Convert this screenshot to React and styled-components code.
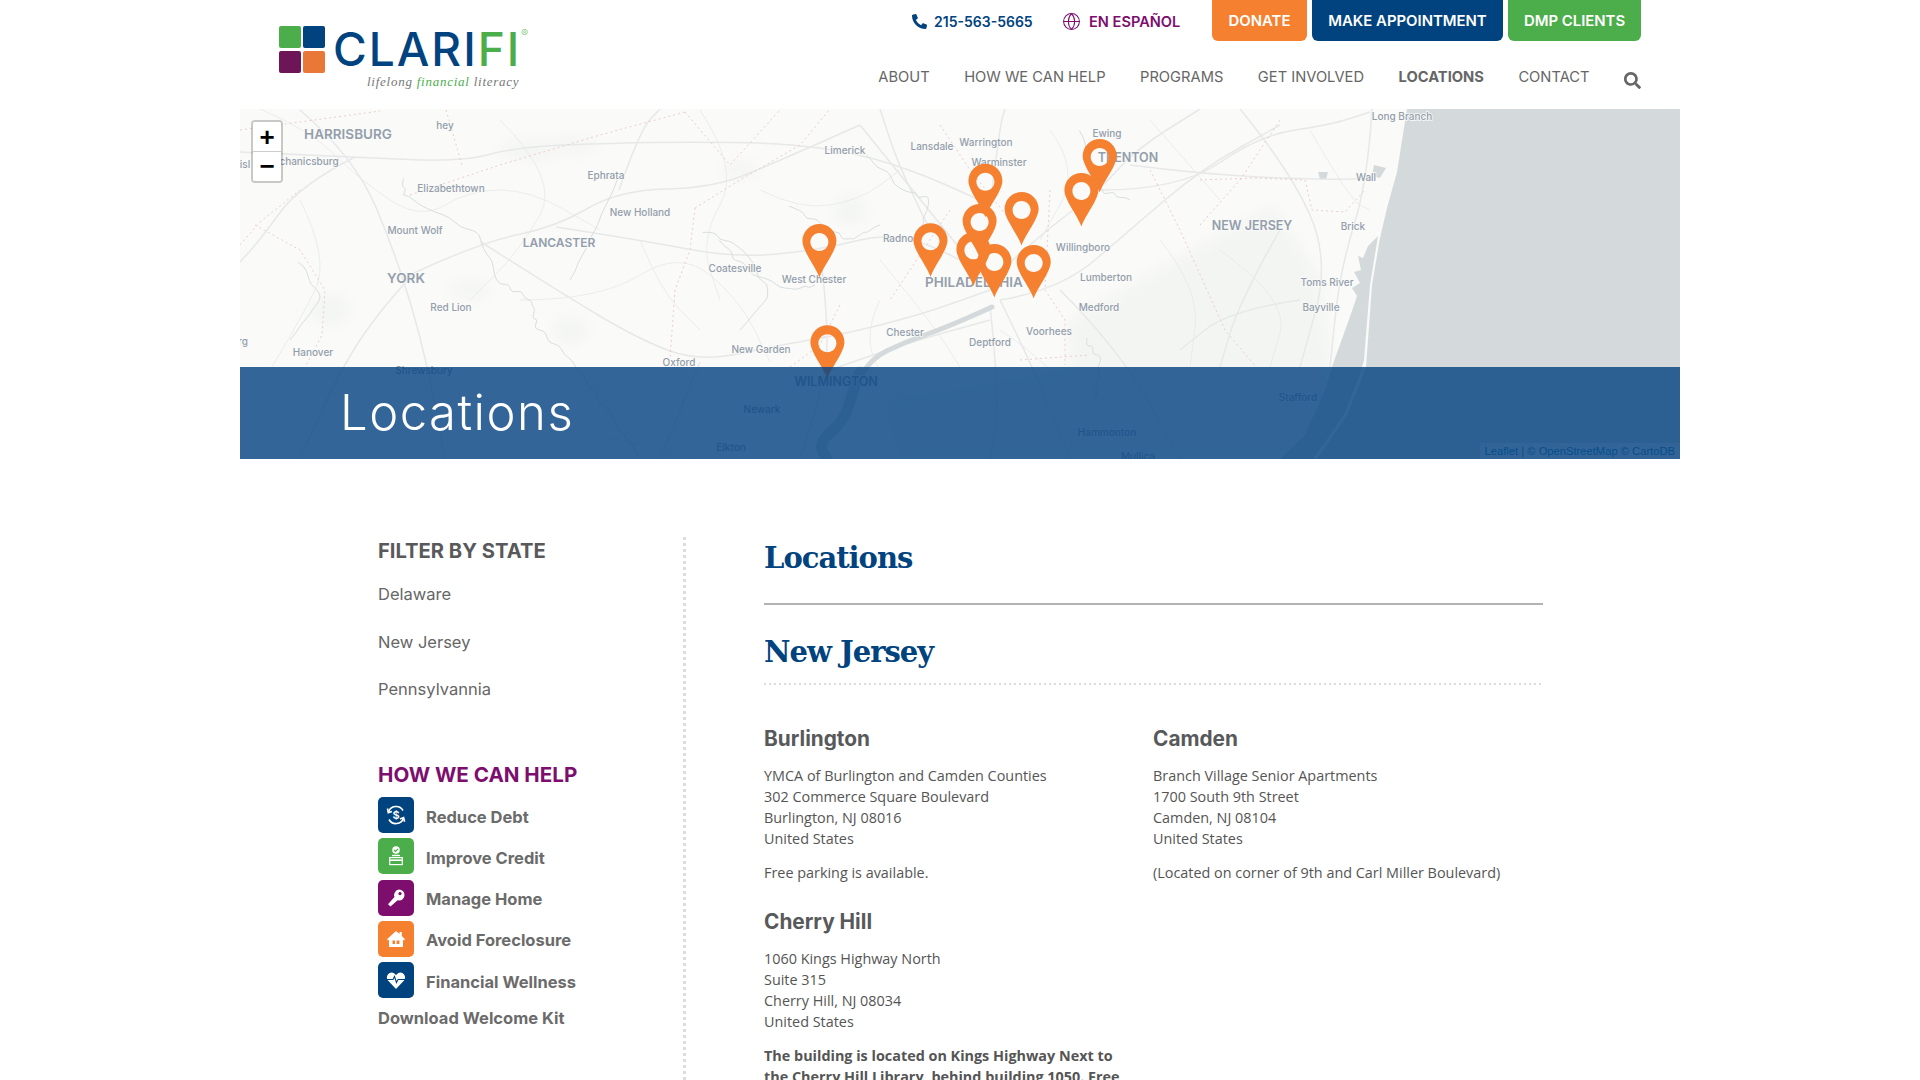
import React from "react";
import styled, { createGlobalStyle } from "styled-components";
import { FaPhoneAlt, FaSearch } from "react-icons/fa";
import { Globe } from "lucide-react";

const NAVY = "#00437f";
const GREEN = "#4bae4a";
const ORANGE = "#f58030";
const PURPLE = "#7d0e6e";
const SANS = `Inter, "Liberation Sans", sans-serif`;
const BODY = `"Open Sans", "Liberation Sans", sans-serif`;
const SLAB = `"DejaVu Serif", "Liberation Serif", serif`;

const GlobalStyle = createGlobalStyle`
  html { scrollbar-width: none; }
  body {
    margin: 0;
    background: #fff;
    color: #555;
    font-family: ${BODY};
  }
  * { box-sizing: border-box; }
`;

const navItems = ["ABOUT", "HOW WE CAN HELP", "PROGRAMS", "GET INVOLVED", "LOCATIONS", "CONTACT"];

const labels = [
  ["HARRISBURG", 348, 134, 13.5, 600],
  ["hey", 445, 125, 10],
  ["chanicsburg", 309, 161, 10],
  ["isl", 245, 164, 10],
  ["Elizabethtown", 451, 188, 10],
  ["Ephrata", 606, 175, 10],
  ["New Holland", 640, 212, 10],
  ["Mount Wolf", 415, 230, 10],
  ["LANCASTER", 559, 242, 12, 600],
  ["Coatesville", 735, 268, 10],
  ["West Chester", 814, 279, 10],
  ["YORK", 406, 278, 13.5, 600],
  ["Red Lion", 451, 307, 10],
  ["Hanover", 313, 352, 10],
  ["rg", 243, 341, 10],
  ["Shrewsbury", 424, 370, 10],
  ["Oxford", 679, 362, 10],
  ["New Garden", 761, 349, 10],
  ["WILMINGTON", 836, 381, 12.5, 600],
  ["Newark", 762, 409, 10],
  ["Elkton", 731, 447, 10],
  ["Limerick", 845, 150, 10],
  ["Lansdale", 932, 146, 10],
  ["Warrington", 986, 142, 10],
  ["Warminster", 999, 162, 10],
  ["Ewing", 1107, 133, 10],
  ["TRENTON", 1128, 157, 12.5, 600],
  ["Long Branch", 1402, 116, 10],
  ["Wall", 1366, 177, 10],
  ["NEW JERSEY", 1252, 225, 12.5, 600],
  ["Brick", 1353, 226, 10],
  ["Radnor", 900, 238, 10],
  ["Willingboro", 1083, 247, 10],
  ["Lumberton", 1106, 277, 10],
  ["PHILADELPHIA", 974, 282, 13.5, 600],
  ["Toms River", 1327, 282, 10],
  ["Medford", 1099, 307, 10],
  ["Bayville", 1321, 307, 10],
  ["Voorhees", 1049, 331, 10],
  ["Chester", 905, 332, 10],
  ["Deptford", 990, 342, 10],
  ["Stafford", 1298, 397, 10],
  ["Hammonton", 1107, 432, 10],
  ["Mullica", 1138, 456, 10],
];

const pins = [
  [1099.7, 156],
  [985.4, 180.7],
  [1081.4, 190],
  [1021.6, 209],
  [979.6, 221],
  [930.5, 240.3],
  [819.4, 241],
  [973.4, 249.3],
  [994.4, 261],
  [1033.7, 262],
  [827.4, 342.3],
];

const roads = [
  "M240 152 L355 157 L461 162 L517 147 L615 143 L687 142 L781 143 L857 153 L925 175 L990 205",
  "M300 110 L355 157 L398 260 L426 357 L445 459",
  "M414 273 L481 242 L556 227 L619 190 L714 188 L781 160 L860 125",
  "M355 157 L300 185 L260 240 L240 262",
  "M414 273 L380 310 L340 370 L300 459",
  "M556 227 L640 240 L735 258 L820 250 L900 230 L990 275",
  "M481 242 L556 290 L640 340 L700 362 L780 345 L840 335 L920 315 L990 290",
  "M820 250 L826 300 L828 370 L800 459",
  "M619 190 L640 130 L660 109",
  "M860 125 L925 205 L985 280",
  "M990 280 L1040 235 L1100 190 L1135 150 L1200 109",
  "M1100 190 L1180 190 L1260 135 L1330 125 L1370 112",
  "M1130 165 L1210 175 L1330 180 L1376 178",
  "M1000 300 L1060 290 L1130 230 L1200 170 L1280 125",
  "M1000 300 L1030 360 L1070 459",
  "M990 305 L1000 400 L990 459",
  "M1060 290 L1120 350 L1180 459",
  "M1240 109 L1290 170 L1330 260 L1300 367",
  "M1372 109 L1368 180 L1340 270 L1330 367",
  "M1300 300 L1230 310 L1180 350",
  "M830 370 L900 345 L990 320",
  "M700 362 L660 459",
  "M990 205 L1000 125 L1005 109",
  "M930 230 L900 170 L880 109",
  "M1280 230 L1240 300 L1220 367",
];

const thinRoads = [
  "M260 109 L310 130 L360 180 L420 220 L470 190 L530 190 L600 230",
  "M300 200 L330 260 L300 320 L270 370",
  "M520 300 L600 300 L680 250 L740 300 L770 362",
  "M640 240 L660 290 L700 330",
  "M880 260 L930 320 L960 367",
  "M760 190 L800 210 L860 200 L900 170",
  "M1160 240 L1200 290 L1190 367",
  "M1050 130 L1080 170 L1040 240",
  "M1220 250 L1290 300 L1270 367",
  "M1150 120 L1220 200",
  "M1310 130 L1350 200 L1370 210",
  "M430 370 L520 420 L620 440 L700 459",
  "M500 120 L560 180 L520 250 L470 300",
  "M700 110 L740 170 L700 240 L720 300",
  "M880 300 L860 340 L900 400",
  "M1000 330 L1060 370 L1100 450",
];

const county = [
  "M240 130 L300 122 L380 111",
  "M446 110 L462 165",
  "M410 195 L500 165 L600 135 L685 112",
  "M685 112 L730 165 L780 110",
  "M240 245 L260 222 L300 190",
  "M255 225 L300 250 L325 290 L322 335 L305 367",
  "M695 208 L690 250 L675 290 L670 360",
  "M695 208 L740 180 L800 145 L830 109",
  "M840 305 L820 345 L790 367",
  "M950 210 L920 255 L890 300",
  "M940 125 L970 170 L1010 220",
  "M1050 190 L1045 290 L1065 320 L1065 365",
  "M1150 170 L1180 230 L1225 330 L1256 367",
  "M1255 178 L1305 180 L1312 210 L1345 212 L1365 190",
  "M1200 180 L1255 178",
  "M1200 225 L1240 180 L1280 120",
  "M1020 360 L1090 355",
];

const rivers = [
  "M402 180 L406 197 L477 233 L501 283 L532 300 L536 327 L572 360 L600 400 L640 459",
  "M790 205 L820 225 L850 240 L880 225",
  "M720 240 L745 270 L790 290 L815 285",
  "M1080 130 L1100 190 L1130 200",
  "M860 150 L905 190 L930 200 L920 230",
  "M620 175 L590 240 L570 280",
  "M705 230 L745 250 L770 295 L740 330",
  "M300 260 L320 300 L290 340",
  "M1085 340 L1100 360 L1095 400",
];

const blobs = [
  [530, 150, 30, 9],
  [575, 145, 22, 7],
  [740, 170, 18, 7],
  [330, 310, 18, 14],
  [570, 330, 16, 12],
  [470, 290, 20, 8],
  [850, 210, 14, 14],
];

// rounds a point list off into one curve, with a small wave for the rivers
const curve = (d, wave = 0) => {
  const nums = d.match(/-?\d+(\.\d+)?/g).map(Number);
  const pts = [];
  for (let i = 0; i + 3 < nums.length; i += 2) {
    const [x1, y1, x2, y2] = nums.slice(i, i + 4);
    for (let s = 0; s < (wave ? 5 : 1); s++) {
      const t = wave ? s / 5 : 0;
      const off = wave ? Math.sin((x1 + y1 + s) * 2.7) * wave : 0;
      pts.push([x1 + (x2 - x1) * t + off, y1 + (y2 - y1) * t - off]);
    }
  }
  pts.push(nums.slice(-2));
  let out = `M${pts[0][0]} ${pts[0][1]}`;
  for (let i = 1; i < pts.length - 1; i++) {
    const mx = (pts[i][0] + pts[i + 1][0]) / 2;
    const my = (pts[i][1] + pts[i + 1][1]) / 2;
    out += ` Q${pts[i][0]} ${pts[i][1]} ${mx} ${my}`;
  }
  return `${out} L${pts[pts.length - 1][0]} ${pts[pts.length - 1][1]}`;
};

const MapLayer = () => (
  <MapSvg viewBox="240 109 1440 350" aria-hidden="true">
    <defs>
      <filter id="soft" x="-20%" y="-20%" width="140%" height="140%">
        <feGaussianBlur stdDeviation="7" />
      </filter>
    </defs>
    <rect x="240" y="109" width="1440" height="350" fill="#fafaf8" />
    <g filter="url(#soft)" fill="#f3f5f3">
      <path d="M1072 367 L1068 323 L1130 287 L1206 243 L1273 207 L1318 277 L1331 367 L1322 459 L900 459 L880 400 Z" />
      {blobs.map(([x, y, rx, ry]) => (
        <ellipse key={`${x}-${y}`} cx={x} cy={y} rx={rx} ry={ry} />
      ))}
    </g>
    <path
      d="M1407 109 L1397 172 L1387 208 L1380 238 L1372 285 L1366 367 L1363 375 L1347 415 L1317 459 L1680 459 L1680 109 Z"
      fill="#d4dadc"
    />
    <path
      d="M1378 236 L1368 246 L1363 258 L1358 256 L1361 270 L1354 272 L1360 283 L1352 288 L1357 296 L1353 308 L1347 325 L1338 350 L1332 367 L1325 390 L1305 435 L1280 459 L1313 459 L1344 415 L1360 375 L1364 360 L1370 285 Z"
      fill="#d4dadc"
    />
    <path d="M1374 165 L1386 168 L1380 178 L1372 176 Z M1318 172 L1328 172 L1326 180 L1320 179 Z" fill="#d4dadc" />
    {roads.map((d) => (
      <RoadLine key={d} d={curve(d)} />
    ))}
    {thinRoads.map((d) => (
      <RoadLine key={d} d={curve(d)} $thin />
    ))}
    {rivers.map((d) => (
      <RiverLine key={d} d={curve(d, 2.5)} />
    ))}
    <WaterLine $width={5} d={curve("M992 307 L970 317 L939 330 L903 343 L872 358 L854 387")} />
    <WaterLine $width={11} d={curve("M860 372 L854 387 L845 420 L818 443 L827 459")} />
    {county.map((d) => (
      <CountyLine key={d} d={d} />
    ))}
    {labels.map(([text, x, y, size, weight]) => (
      <PlaceLabel key={text} x={x} y={y} fontSize={size} fontWeight={weight || 500}>
        {text}
      </PlaceLabel>
    ))}
    {pins.map(([x, y]) => (
      <PinShape
        key={`${x}-${y}`}
        transform={`translate(${x} ${y})`}
        fillRule="evenodd"
        d="M0 36.5 C-4 25 -17 10 -17 0 A17 17 0 1 1 17 0 C17 10 4 25 0 36.5 Z M0 -8 C-5 -8 -9 -4 -9 1 C-9 6 -5 10 0 10 C5 10 9 6 9 1 C9 -4 5 -8 0 -8 Z"
      />
    ))}
  </MapSvg>
);

const LogoMark = () => (
  <LogoSquares>
    <LogoSquare $color={GREEN} />
    <LogoSquare $color={NAVY} />
    <LogoSquare $color="#6d1557" />
    <LogoSquare $color="#e97838" />
  </LogoSquares>
);

const DebtIcon = () => (
  <svg width="36" height="36" viewBox="0 0 36 36" fill="none" stroke="#fff" strokeWidth="1.6">
    <path d="M10.5 15 A8 8 0 0 1 25 13.5" />
    <path d="M9.5 11.5 L10.3 15.6 L14 14.4" />
    <path d="M25.6 21 A8 8 0 0 1 11 22.5" />
    <path d="M26.6 24.8 L25.6 20.6 L22 22" />
    <text x="18" y="22" textAnchor="middle" fontFamily="Inter, sans-serif" fontSize="11" fontWeight="600" fill="#fff" stroke="none">
      $
    </text>
  </svg>
);

const CreditIcon = () => (
  <svg width="36" height="36" viewBox="0 0 36 36" fill="none">
    <circle cx="18" cy="12" r="3.8" fill="#fff" />
    <path d="M16 12 L17.5 13.5 L20 10.8" stroke={GREEN} strokeWidth="1.2" />
    <rect x="11.7" y="19.6" width="12.6" height="7" stroke="#fff" strokeWidth="1.2" />
    <rect x="11.5" y="21.4" width="13" height="1.6" fill="#fff" />
    <rect x="14" y="16.8" width="8" height="1.4" fill="#fff" />
  </svg>
);

const KeyIcon = () => (
  <svg width="36" height="36" viewBox="0 0 36 36" fill="#fff">
    <path
      fillRule="evenodd"
      d="M21 9.5 A5.5 5.5 0 0 1 21 20.5 L19.6 20.2 L12.5 26.5 L10 24.2 L16.5 17 A5.5 5.5 0 0 1 21 9.5 Z M22 12 A1.6 1.6 0 1 0 22.01 12 Z"
    />
  </svg>
);

const HomeIcon = () => (
  <svg width="36" height="36" viewBox="0 0 36 36" fill="#fff">
    <path
      fillRule="evenodd"
      d="M18 10 L21.5 13 V11 H23.8 V15 L27 18.2 L26 19.5 L25 18.6 V26 H11 V18.6 L10 19.5 L9 18.2 Z M14.5 19.5 V23 H17 V19.5 Z M18.6 19.5 V23 H21.4 V19.5 Z"
    />
  </svg>
);

const HeartIcon = () => (
  <svg width="36" height="36" viewBox="0 0 36 36" fill="none">
    <path d="M18 27 L10 18.5 C6.5 14 12 8.5 16 11.2 L18 13 L20 11.2 C24 8.5 29.5 14 26 18.5 Z" fill="#fff" />
    <path d="M9 17.5 H15 L16.5 14.5 L18.5 20.5 L20 17.5 H27" stroke={NAVY} strokeWidth="1.1" />
  </svg>
);

const helpItems = [
  ["Reduce Debt", NAVY, DebtIcon],
  ["Improve Credit", GREEN, CreditIcon],
  ["Manage Home", PURPLE, KeyIcon],
  ["Avoid Foreclosure", ORANGE, HomeIcon],
  ["Financial Wellness", NAVY, HeartIcon],
];

const App = () => (
  <Page>
    <GlobalStyle />
    <Header>
      <LogoLink>
        <LogoMark />
        <LogoText>
          <Wordmark>
            CLARI<WordmarkGreen>FI</WordmarkGreen>
            <Registered>®</Registered>
          </Wordmark>
          <Tagline>
            lifelong <TaglineGreen>financial</TaglineGreen> literacy
          </Tagline>
        </LogoText>
      </LogoLink>
      <HeaderRight>
        <TopRow>
          <ContactLink $color={NAVY} $width={150} $gap={7} $size={14}>
            <FaPhoneAlt size={15} />
            215-563-5665
          </ContactLink>
          <ContactLink $color={PURPLE} $width={150} $gap={8} $size={14.6}>
            <Globe size={19} strokeWidth={1.3} />
            EN ESPAÑOL
          </ContactLink>
          <CtaGroup>
            <CtaButton $bg={ORANGE} $width={95}>DONATE</CtaButton>
            <CtaButton $bg={NAVY} $width={191}>MAKE APPOINTMENT</CtaButton>
            <CtaButton $bg={GREEN} $width={133}>DMP CLIENTS</CtaButton>
          </CtaGroup>
        </TopRow>
        <NavRow>
          {navItems.map((item) => (
            <NavLink key={item} $active={item === "LOCATIONS"}>
              {item}
            </NavLink>
          ))}
          <SearchIcon>
            <FaSearch size={17} />
          </SearchIcon>
        </NavRow>
      </HeaderRight>
    </Header>

    <MapBox>
      <MapLayer />
      <ZoomControl>
        <ZoomButton>+</ZoomButton>
        <ZoomButton>−</ZoomButton>
      </ZoomControl>
      <Attribution>Leaflet | © OpenStreetMap © CartoDB</Attribution>
      <TitleBand>
        <BandTitle>Locations</BandTitle>
      </TitleBand>
    </MapBox>

    <Content>
      <Sidebar>
        <FilterTitle>FILTER BY STATE</FilterTitle>
        <StateList>
          <StateLink>Delaware</StateLink>
          <StateLink>New Jersey</StateLink>
          <StateLink>Pennsylvannia</StateLink>
        </StateList>
        <HelpTitle>HOW WE CAN HELP</HelpTitle>
        <HelpList>
          {helpItems.map(([label, color, Icon]) => (
            <HelpRow key={label}>
              <IconTile $bg={color}>
                <Icon />
              </IconTile>
              <HelpLabel>{label}</HelpLabel>
            </HelpRow>
          ))}
        </HelpList>
        <WelcomeKit>Download Welcome Kit</WelcomeKit>
      </Sidebar>

      <Main>
        <PageTitle>Locations</PageTitle>
        <SolidRule />
        <StateTitle>New Jersey</StateTitle>
        <DottedRule />
        <LocationGrid>
          <Location>
            <CityName>Burlington</CityName>
            <Address>
              YMCA of Burlington and Camden Counties
              <br />
              302 Commerce Square Boulevard
              <br />
              Burlington, NJ 08016
              <br />
              United States
            </Address>
            <Note>Free parking is available.</Note>
          </Location>
          <Location>
            <CityName>Camden</CityName>
            <Address>
              Branch Village Senior Apartments
              <br />
              1700 South 9th Street
              <br />
              Camden, NJ 08104
              <br />
              United States
            </Address>
            <Note>(Located on corner of 9th and Carl Miller Boulevard)</Note>
          </Location>
          <Location>
            <CityName>Cherry Hill</CityName>
            <Address>
              1060 Kings Highway North
              <br />
              Suite 315
              <br />
              Cherry Hill, NJ 08034
              <br />
              United States
            </Address>
            <Note $bold>
              The building is located on Kings Highway Next to the Cherry Hill Library, behind building 1050. Free
              parking is available.
            </Note>
          </Location>
        </LocationGrid>
      </Main>
    </Content>
  </Page>
);

export default App;

const Page = styled.div`
  width: 1440px;
  margin: 0 auto;
`;

const Header = styled.header`
  height: 109px;
  padding: 0 39px;
  display: flex;
  justify-content: space-between;
`;

const LogoLink = styled.a`
  display: flex;
  align-items: flex-start;
  gap: 8px;
  padding-top: 26px;
`;

const LogoSquares = styled.div`
  width: 46px;
  height: 46px;
  display: grid;
  grid-template-columns: 22px 22px;
  grid-auto-rows: 22px;
  gap: 3px 2px;
`;

const LogoSquare = styled.span`
  background: ${(p) => p.$color};
  border-radius: 2px;
`;

const LogoText = styled.div`
  display: flex;
  flex-direction: column;
`;

const Wordmark = styled.div`
  position: relative;
  font-family: ${SANS};
  font-size: 46px;
  font-weight: 500;
  line-height: 46px;
  letter-spacing: 2px;
  color: ${NAVY};
  white-space: nowrap;
`;

const WordmarkGreen = styled.span`
  color: ${GREEN};
`;

const Registered = styled.span`
  position: absolute;
  top: 1px;
  left: 188px;
  font-size: 11px;
  line-height: 12px;
  letter-spacing: 0;
  color: ${GREEN};
  opacity: 0.6;
`;

const Tagline = styled.div`
  margin: 2px 0 0 34px;
  font-family: "Liberation Serif", serif;
  font-style: italic;
  font-size: 13px;
  line-height: 16px;
  letter-spacing: 0.75px;
  color: #777;
  white-space: nowrap;
`;

const TaglineGreen = styled.span`
  color: ${GREEN};
`;

const HeaderRight = styled.div`
  display: flex;
  flex-direction: column;
  align-items: flex-end;
`;

const TopRow = styled.div`
  display: flex;
  align-items: flex-start;
`;

const ContactLink = styled.a`
  width: ${(p) => p.$width}px;
  height: 41px;
  padding-top: 2px;
  display: flex;
  align-items: center;
  gap: ${(p) => p.$gap}px;
  font-family: ${SANS};
  font-size: ${(p) => p.$size}px;
  font-weight: 600;
  color: ${(p) => p.$color};
  white-space: nowrap;
`;

const CtaGroup = styled.div`
  display: flex;
  gap: 5px;
`;

const CtaButton = styled.a`
  width: ${(p) => p.$width}px;
  height: 41px;
  display: flex;
  align-items: center;
  justify-content: center;
  background: ${(p) => p.$bg};
  border-radius: 0 0 6px 6px;
  font-family: ${SANS};
  font-size: 14.9px;
  font-weight: 600;
  color: #fff;
  white-space: nowrap;
`;

const NavRow = styled.nav`
  margin-top: 24px;
  display: flex;
  align-items: center;
  gap: 34.5px;
`;

const NavLink = styled.a`
  font-family: ${SANS};
  font-size: 14.7px;
  line-height: 24px;
  font-weight: ${(p) => (p.$active ? 700 : 400)};
  color: #666;
  white-space: nowrap;
`;

const SearchIcon = styled.span`
  display: flex;
  margin-top: 6px;
  color: #666;
`;

const MapBox = styled.section`
  position: relative;
  height: 350px;
  overflow: hidden;
`;

const MapSvg = styled.svg`
  display: block;
  width: 1440px;
  height: 350px;
`;

const RoadLine = styled.path`
  fill: none;
  stroke: #e7e8e8;
  stroke-width: ${(p) => (p.$thin ? 0.8 : 1.5)};
`;

const RiverLine = styled.path`
  fill: none;
  stroke: #d9dee0;
  stroke-width: 1;
`;

const WaterLine = styled.path`
  fill: none;
  stroke: #d4dadc;
  stroke-width: ${(p) => p.$width};
  stroke-linecap: round;
`;

const CountyLine = styled.path`
  fill: none;
  stroke: #ecccd0;
  stroke-width: 1;
  stroke-dasharray: 2 3;
`;

const PlaceLabel = styled.text`
  font-family: ${SANS};
  fill: #939eac;
  text-anchor: middle;
  dominant-baseline: central;
  paint-order: stroke;
  stroke: #fafaf8;
  stroke-width: 1.5px;
`;

const PinShape = styled.path`
  fill: #f58030;
`;

const ZoomControl = styled.div`
  position: absolute;
  top: 11px;
  left: 11px;
  width: 32px;
  border: 2px solid rgba(0, 0, 0, 0.2);
  border-radius: 4px;
  background-clip: padding-box;
`;

const ZoomButton = styled.div`
  height: 29px;
  background: #fff;
  display: flex;
  align-items: center;
  justify-content: center;
  font-family: "Liberation Sans", sans-serif;
  font-size: 26px;
  font-weight: 700;
  color: #000;
  &:first-child {
    height: 30px;
    padding-top: 2px;
    border-bottom: 1px solid #ccc;
    border-radius: 2px 2px 0 0;
  }
  &:last-child {
    border-radius: 0 0 2px 2px;
  }
`;

const Attribution = styled.div`
  position: absolute;
  right: 0;
  bottom: 0;
  padding: 0 5px;
  height: 16px;
  line-height: 16px;
  background: rgba(255, 255, 255, 0.7);
  font-family: "Liberation Sans", sans-serif;
  font-size: 11.2px;
  color: #0078a8;
`;

const TitleBand = styled.div`
  position: absolute;
  left: 0;
  right: 0;
  bottom: 0;
  height: 92px;
  padding-left: 100px;
  display: flex;
  align-items: center;
  background: rgba(7, 68, 131, 0.82);
`;

const BandTitle = styled.h2`
  margin: 0;
  font-family: ${SANS};
  font-size: 49px;
  font-weight: 300;
  line-height: 92px;
  letter-spacing: 1.5px;
  color: #fff;
`;

const Content = styled.div`
  height: 621px;
  padding: 78px 0 0 138px;
  display: flex;
  overflow: hidden;
`;

const Sidebar = styled.aside`
  width: 308px;
  flex: none;
  background: linear-gradient(#ddd 50%, transparent 50%) right top / 3px 6px repeat-y;
`;

const FilterTitle = styled.h3`
  margin: 0;
  padding-top: 1px;
  font-family: ${SANS};
  font-size: 20.2px;
  font-weight: 700;
  line-height: 25px;
  color: #58595b;
`;

const StateList = styled.div`
  margin-top: 19px;
  display: flex;
  flex-direction: column;
  gap: 23.5px;
`;

const StateLink = styled.a`
  font-family: ${SANS};
  font-size: 16.5px;
  line-height: 24px;
  color: #666;
`;

const HelpTitle = styled.h3`
  margin: 60px 0 0;
  padding-top: 1px;
  font-family: ${SANS};
  font-size: 20.6px;
  font-weight: 700;
  line-height: 25px;
  color: ${PURPLE};
`;

const HelpList = styled.div`
  margin-top: 10px;
  display: flex;
  flex-direction: column;
  gap: 5.25px;
`;

const HelpRow = styled.a`
  display: flex;
  align-items: center;
  gap: 12px;
`;

const IconTile = styled.span`
  width: 36px;
  height: 36px;
  display: block;
  background: ${(p) => p.$bg};
  border-radius: 5px;
  svg {
    display: block;
  }
`;

const HelpLabel = styled.span`
  padding-top: 3px;
  font-family: ${SANS};
  font-size: 16.5px;
  font-weight: 700;
  color: #6b6b6b;
`;

const WelcomeKit = styled.a`
  display: block;
  margin-top: 8px;
  font-family: ${SANS};
  font-size: 16.5px;
  font-weight: 700;
  line-height: 24px;
  color: #6b6b6b;
`;

const Main = styled.main`
  width: 779px;
  margin-left: 78px;
  flex: none;
`;

const PageTitle = styled.h1`
  margin: 0;
  font-family: ${SLAB};
  font-size: 29px;
  font-weight: 700;
  line-height: 42px;
  letter-spacing: -1px;
  color: ${NAVY};
`;

const SolidRule = styled.div`
  height: 2px;
  margin-top: 24px;
  background: #b3b3b3;
`;

const StateTitle = styled.h2`
  margin: 26px 0 0;
  font-family: ${SLAB};
  font-size: 29px;
  font-weight: 700;
  line-height: 42px;
  letter-spacing: -1px;
  color: ${NAVY};
`;

const DottedRule = styled.div`
  height: 2px;
  margin-top: 10px;
  background: linear-gradient(90deg, #ddd 50%, transparent 50%) left top / 5px 2px repeat-x;
`;

const LocationGrid = styled.div`
  margin-top: 41px;
  display: grid;
  grid-template-columns: 364px 364px;
  column-gap: 25px;
  row-gap: 26px;
  align-items: start;
`;

const Location = styled.article``;

const CityName = styled.h3`
  margin: 0;
  padding-top: 1px;
  font-family: ${SANS};
  font-size: 20.8px;
  font-weight: 700;
  line-height: 23px;
  color: #58595b;
`;

const Address = styled.p`
  margin: 15px 0 0;
  font-size: 14.4px;
  line-height: 21px;
  color: #555;
`;

const Note = styled.p`
  margin: 13px 0 0;
  font-size: 14.4px;
  line-height: 21px;
  font-weight: ${(p) => (p.$bold ? 700 : 400)};
  color: #555;
`;
